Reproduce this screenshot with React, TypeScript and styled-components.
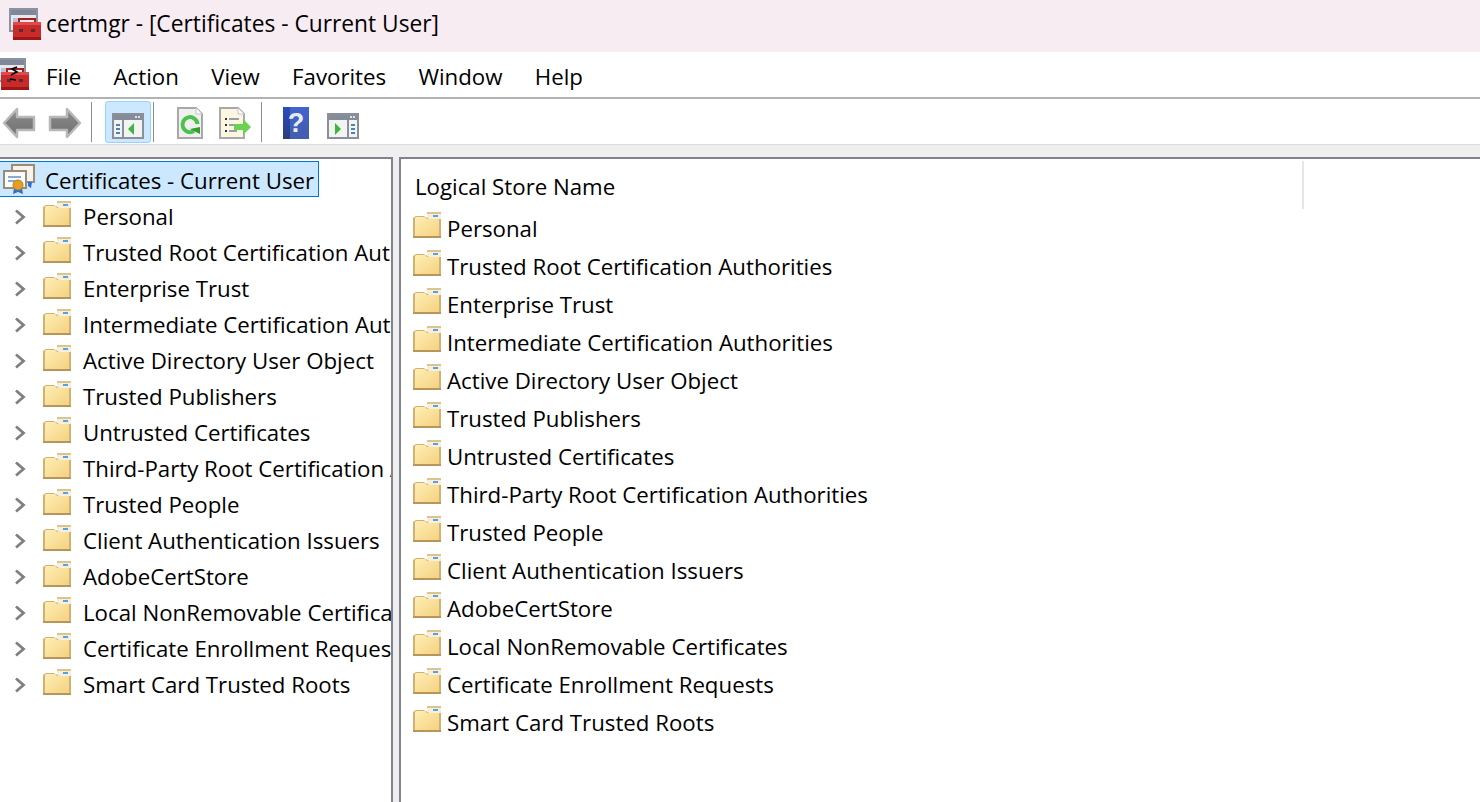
import React from "react"
import styled, { createGlobalStyle } from "styled-components"

/* Data */

const STORES = [
    "Personal",
    "Trusted Root Certification Authorities",
    "Enterprise Trust",
    "Intermediate Certification Authorities",
    "Active Directory User Object",
    "Trusted Publishers",
    "Untrusted Certificates",
    "Third-Party Root Certification Authorities",
    "Trusted People",
    "Client Authentication Issuers",
    "AdobeCertStore",
    "Local NonRemovable Certificates",
    "Certificate Enrollment Requests",
    "Smart Card Trusted Roots",
]

const MENUS = ["File", "Action", "View", "Favorites", "Window", "Help"]

/* Styles */

const GlobalStyle = createGlobalStyle`
    html, body {
        margin: 0;
        padding: 0;
        background: #ffffff;
    }
    body {
        font-family: "Open Sans", "Liberation Sans", sans-serif;
        font-size: 22.25px;
        color: #000000;
    }
`

const Page = styled.div`
    width: 1480px;
    height: 802px;
    display: flex;
    flex-direction: column;
    overflow: hidden;
`

const TitleBar = styled.div`
    height: 52px;
    flex: none;
    display: flex;
    align-items: center;
    gap: 5px;
    padding: 0 0 4px 9px;
    box-sizing: border-box;
    background: #f7ecf2;
    font-size: 22.75px;
    white-space: nowrap;
`

const TitleText = styled.span`
    padding-bottom: 2px;
`

const MenuBar = styled.div`
    height: 47px;
    flex: none;
    display: flex;
    align-items: center;
    box-sizing: border-box;
    border-bottom: 2px solid #b2b2b2;
    background: #ffffff;
`

const MenuIcon = styled.div`
    width: 46px;
    height: 32px;
    flex: none;
    overflow: hidden;
    margin-bottom: 2px;
`

const MenuIconShift = styled.div`
    margin-left: -3px;
`

const MenuItem = styled.div`
    margin-right: 32.3px;
    padding-top: 4px;
`

const Toolbar = styled.div`
    height: 46px;
    flex: none;
    display: flex;
    align-items: center;
    box-sizing: border-box;
    border-bottom: 1px solid #dcdcdc;
    background: #ffffff;
`

const ToolButton = styled.div<{ $w?: number; $gap?: number; $active?: boolean }>`
    width: ${({ $w }) => $w ?? 46}px;
    height: 42px;
    margin-left: ${({ $gap }) => $gap ?? 0}px;
    flex: none;
    display: flex;
    align-items: flex-end;
    justify-content: center;
    box-sizing: border-box;
    padding-bottom: 3px;
    border-radius: 3px;
    border: 1px solid ${({ $active }) => ($active ? "#99d1ff" : "transparent")};
    background: ${({ $active }) => ($active ? "#cce8ff" : "transparent")};

    svg {
        display: block;
        flex: none;
    }
`

const ToolSeparator = styled.div<{ $before: number; $after: number }>`
    width: 1px;
    height: 40px;
    flex: none;
    margin: 0 ${({ $after }) => $after}px 0 ${({ $before }) => $before}px;
    background: #8c8c8c;
`

const Workspace = styled.div`
    flex: 1;
    min-height: 0;
    display: grid;
    grid-template-columns: 393px 1fr;
    column-gap: 6px;
    padding-top: 12px;
    background: #efefef;
`

const TreePane = styled.div`
    box-sizing: border-box;
    border-top: 2px solid #83838f;
    border-right: 2px solid #83838f;
    background: #ffffff;
    padding-top: 2px;
    overflow: hidden;
`

const RootNode = styled.div`
    width: 319px;
    height: 36px;
    margin-bottom: 2px;
    box-sizing: border-box;
    display: flex;
    align-items: center;
    gap: 10px;
    padding-left: 3px;
    background: #cce8ff;
    border: 1px solid #0078d7;
    border-left: none;
    white-space: nowrap;
`

const RootLabel = styled.span`
    padding-top: 2px;
`

const TreeRow = styled.div`
    height: 36px;
    display: flex;
    align-items: center;
    white-space: nowrap;
    overflow: hidden;
`

const TreeLabel = styled.span`
    padding-bottom: 2px;
`

const Chevron = styled.svg`
    width: 12px;
    height: 16px;
    flex: none;
    margin: 0 17px 0 14px;
`

const FolderSlot = styled.div`
    width: 28px;
    height: 26px;
    flex: none;
    margin: -6px 12px 0 0;
`

const ListPane = styled.div`
    box-sizing: border-box;
    border-top: 2px solid #83838f;
    border-left: 2px solid #83838f;
    background: #ffffff;
    overflow: hidden;
`

const ListHeader = styled.div`
    width: 903px;
    height: 48px;
    margin-top: 2px;
    box-sizing: border-box;
    display: flex;
    align-items: center;
    padding: 3px 0 0 14px;
    border-right: 2px solid #e6e6e6;
    white-space: nowrap;
`

const ListRow = styled.div`
    height: 38px;
    display: flex;
    align-items: center;
    padding-left: 12px;
    white-space: nowrap;
`

const ListFolder = styled(FolderSlot)`
    margin: -6px 6px 0 0;
`

/* Icons */

const Toolbox = ({ stray }: { stray?: boolean }) => (
    <svg width="32" height="32" viewBox="0 0 32 32">
        <rect x="1" y="1" width="27" height="22" fill="#e6e8ee" stroke="#8c92a0" strokeWidth="2" />
        <rect x="2" y="2" width="25" height="5" fill="#7f8798" />
        <rect x="4" y="10" width="6" height="10" fill="#b8c2d4" />
        <rect x="12" y="10" width="12" height="2" fill="#9aa0ae" />
        <path d="M10 15 V11 H26 V15" fill="none" stroke="#a02020" strokeWidth="2" />
        <rect x="4" y="14" width="28" height="18" fill="#c92a2a" />
        <rect x="4" y="14" width="28" height="3" fill="#e04a4a" />
        <rect x="4" y="29" width="28" height="3" fill="#9c1616" />
        <rect x="10" y="21" width="4" height="3" fill="#5c2a2a" />
        <rect x="22" y="21" width="4" height="3" fill="#5c2a2a" />
        {stray && <path d="M20 9 L15 11 L20 14 L14 17 M13 21 L19 22" fill="none" stroke="#000000" strokeWidth="1.6" />}
    </svg>
)

const ArrowIcon = ({ flip }: { flip?: boolean }) => (
    <svg width="34" height="32" viewBox="0 0 34 32" style={flip ? { transform: "scaleX(-1)" } : undefined}>
        <defs>
            <linearGradient id="arrowBody" x1="0" y1="0" x2="0" y2="1">
                <stop offset="0" stopColor="#8d8d8d" />
                <stop offset="1" stopColor="#6f6f6f" />
            </linearGradient>
        </defs>
        <path
            d="M2 16 L15 2 V10 H32 V23 H15 V30 Z"
            fill="url(#arrowBody)"
            stroke="#b8b8b8"
            strokeWidth="2.5"
            strokeLinejoin="round"
        />
    </svg>
)

const PaneIcon = ({ right }: { right?: boolean }) => (
    <svg width="32" height="26" viewBox="0 0 32 26">
        <rect x="1" y="1" width="30" height="24" fill="#f2f4f2" stroke="#8a8f99" strokeWidth="2" />
        <rect x="2" y="2" width="28" height="5" fill="#858b98" />
        <rect x="23" y="3" width="2" height="2" fill="#dfe2e8" />
        <rect x="26" y="3" width="2" height="2" fill="#dfe2e8" />
        {right ? (
            <>
                <rect x="20" y="7" width="2" height="18" fill="#8a8f99" />
                <path d="M8 10 L14 16 L8 22 Z" fill="#3fb53f" />
                <rect x="24" y="11" width="4" height="2" fill="#4f7fc0" />
                <rect x="24" y="15" width="4" height="2" fill="#4f7fc0" />
                <rect x="24" y="19" width="4" height="2" fill="#4f7fc0" />
            </>
        ) : (
            <>
                <rect x="10" y="7" width="2" height="18" fill="#8a8f99" />
                <path d="M22 10 L16 16 L22 22 Z" fill="#3fb53f" />
                <rect x="4" y="11" width="4" height="2" fill="#4f7fc0" />
                <rect x="4" y="15" width="4" height="2" fill="#4f7fc0" />
                <rect x="4" y="19" width="4" height="2" fill="#4f7fc0" />
            </>
        )}
    </svg>
)

const RefreshIcon = () => (
    <svg width="26" height="32" viewBox="0 0 26 32">
        <path d="M1 1 H19 L25 7 V31 H1 Z" fill="#f0f0f0" stroke="#a8a8a8" strokeWidth="2" />
        <path d="M19 1 V7 H25" fill="#ffffff" stroke="#c4c4c4" strokeWidth="1" />
        <path d="M17 24 A7.5 7.5 0 1 1 20.5 17" fill="none" stroke="#4cc24c" strokeWidth="4" />
        <path d="M13 22 L23 20 L23 27 Z" fill="#2ea02e" />
    </svg>
)

const ExportIcon = () => (
    <svg width="33" height="32" viewBox="0 0 33 32">
        <path d="M1 1 H19 L25 7 V31 H1 Z" fill="#fbf6e0" stroke="#a8a8a8" strokeWidth="2" />
        <path d="M19 1 V7 H25" fill="#ffffff" stroke="#c4c4c4" strokeWidth="1" />
        <rect x="6" y="11" width="2" height="2" fill="#333333" />
        <rect x="6" y="17" width="2" height="2" fill="#333333" />
        <rect x="6" y="23" width="2" height="2" fill="#333333" />
        <rect x="10" y="11" width="10" height="2" fill="#9c9cac" />
        <rect x="10" y="17" width="8" height="2" fill="#9c9cac" />
        <rect x="10" y="23" width="8" height="2" fill="#9c9cac" />
        <path d="M15 17 H24 V12 L32 20 L24 28 V23 H15 Z" fill="#69d255" />
    </svg>
)

const HelpIcon = () => (
    <svg width="26" height="32" viewBox="0 0 26 32">
        <defs>
            <linearGradient id="helpFill" x1="0" y1="0" x2="0" y2="1">
                <stop offset="0" stopColor="#2a4cc0" />
                <stop offset="1" stopColor="#2d3d78" />
            </linearGradient>
        </defs>
        <rect width="26" height="32" fill="url(#helpFill)" />
        <rect x="7" y="0" width="19" height="32" fill="#5478d8" opacity="0.55" />
        <text x="13" y="25" textAnchor="middle" fontFamily="Liberation Sans" fontWeight="700" fontSize="27" fill="#e8ecf8">
            ?
        </text>
    </svg>
)

const FolderIcon = () => (
    <svg width="28" height="26" viewBox="0 0 28 26">
        <defs>
            <linearGradient id="folderFill" x1="0" y1="0" x2="1" y2="1">
                <stop offset="0" stopColor="#fff0b8" />
                <stop offset="1" stopColor="#f4cf7c" />
            </linearGradient>
        </defs>
        <path d="M14 0 H28 V7 H14 Z" fill="#f5efdc" />
        <path d="M14 0 H28 V2 H14 Z" fill="#dcc48c" />
        <rect x="20" y="3" width="5" height="2" fill="#5da0e0" />
        <path d="M0 26 V6 L3 4 H11 L14 7 H28 V26 Z" fill="url(#folderFill)" />
        <path d="M0 26 V6 L3 4 H11 L14 7 H16 L13 5 H3 L2 6 V24 H26 V7 H28 V26 Z" fill="#d2b272" />
        <rect x="0" y="24" width="28" height="2" fill="#b8955a" />
    </svg>
)

const CertIcon = () => (
    <svg width="32" height="30" viewBox="0 0 32 30" style={{ flex: "none" }}>
        <rect x="9" y="1" width="22" height="17" fill="#f6f3ea" stroke="#9c8b78" strokeWidth="2" />
        <path d="M29 18 L28 24 L25 22 V18 Z" fill="#2f6fd0" />
        <rect x="1" y="7" width="22" height="17" fill="#fbfbfb" stroke="#9c8b78" strokeWidth="2" />
        <rect x="5" y="12" width="13" height="2" fill="#8aa8d8" />
        <rect x="5" y="16" width="9" height="2" fill="#8aa8d8" />
        <path d="M11 24 L10 30 L15 28 L20 30 L19 24 Z" fill="#2f6fd0" />
        <circle cx="15" cy="21" r="5" fill="#e0a028" stroke="#c08018" strokeWidth="1" />
    </svg>
)

/* Page */

const App = () => (
    <Page>
        <GlobalStyle />
        <TitleBar>
            <Toolbox />
            <TitleText>certmgr - [Certificates - Current User]</TitleText>
        </TitleBar>
        <MenuBar>
            <MenuIcon>
                <MenuIconShift>
                    <Toolbox stray />
                </MenuIconShift>
            </MenuIcon>
            {MENUS.map((menu) => (
                <MenuItem key={menu}>{menu}</MenuItem>
            ))}
        </MenuBar>
        <Toolbar>
            <ToolButton $w={38}>
                <ArrowIcon />
            </ToolButton>
            <ToolButton $gap={4}>
                <ArrowIcon flip />
            </ToolButton>
            <ToolSeparator $before={3} $after={13} />
            <ToolButton $active>
                <PaneIcon />
            </ToolButton>
            <ToolSeparator $before={2} $after={13} />
            <ToolButton>
                <RefreshIcon />
            </ToolButton>
            <ToolButton $w={45}>
                <ExportIcon />
            </ToolButton>
            <ToolSeparator $before={3} $after={11} />
            <ToolButton>
                <HelpIcon />
            </ToolButton>
            <ToolButton $gap={1}>
                <PaneIcon right />
            </ToolButton>
        </Toolbar>
        <Workspace>
            <TreePane>
                <RootNode>
                    <CertIcon />
                    <RootLabel>Certificates - Current User</RootLabel>
                </RootNode>
                {STORES.map((store) => (
                    <TreeRow key={store}>
                        <Chevron viewBox="0 0 12 16">
                            <path d="M2 1.5 L9.5 8 L2 14.5" fill="none" stroke="#808080" strokeWidth="2.8" />
                        </Chevron>
                        <FolderSlot>
                            <FolderIcon />
                        </FolderSlot>
                        <TreeLabel>{store}</TreeLabel>
                    </TreeRow>
                ))}
            </TreePane>
            <ListPane>
                <ListHeader>Logical Store Name</ListHeader>
                {STORES.map((store) => (
                    <ListRow key={store}>
                        <ListFolder>
                            <FolderIcon />
                        </ListFolder>
                        <span>{store}</span>
                    </ListRow>
                ))}
            </ListPane>
        </Workspace>
    </Page>
)

export default App
